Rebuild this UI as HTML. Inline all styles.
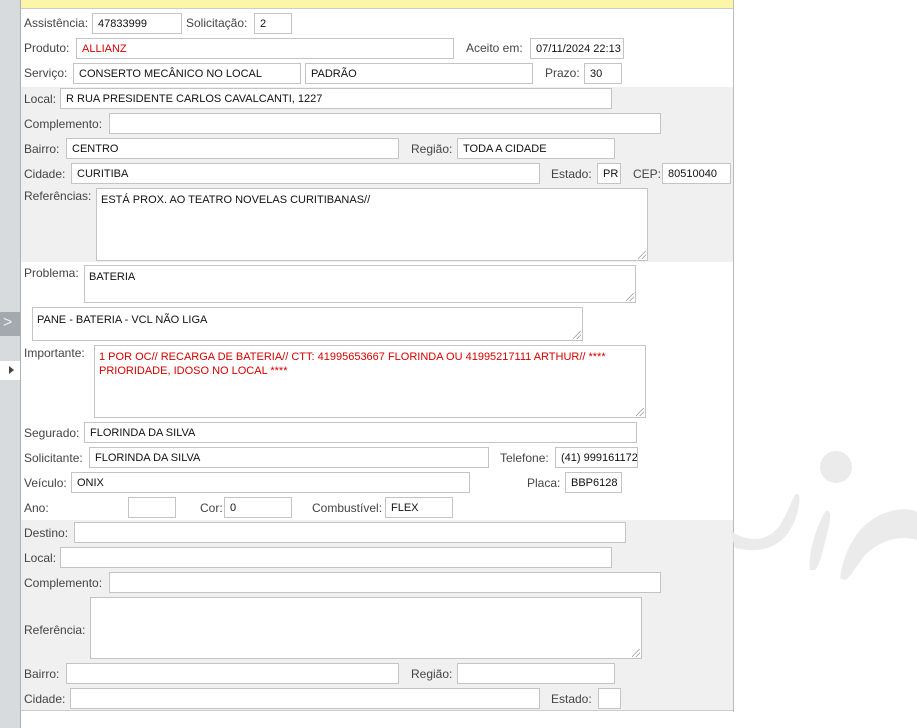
<!DOCTYPE html>
<html><head><meta charset="utf-8"><style>
*{box-sizing:border-box;margin:0;padding:0}
body{width:917px;height:728px;background:#fff;position:relative;overflow:hidden;font-family:"Liberation Sans",Tahoma,sans-serif;font-size:12px;color:#333}
.a{position:absolute}
.l{position:absolute;font-size:12px;color:#444;line-height:14px}
.i{position:absolute;height:21px;background:#fff;border:1px solid #c4c4c4;font-size:11px;color:#111;padding:3px 0 0 5px;white-space:nowrap;overflow:hidden;line-height:14px}
.t{position:absolute;background:#fff;border:1px solid #c4c4c4;font-size:11px;color:#111;padding:4px 0 0 4px;line-height:14px}
.t:after{content:"";position:absolute;right:1px;bottom:1px;width:8px;height:8px;background:linear-gradient(135deg,transparent 45%,#999 45%,#999 52%,transparent 52%,transparent 70%,#999 70%,#999 77%,transparent 77%)}
.r{color:#d40000}
.g{position:absolute;left:21px;width:712px;background:#f0f0f0}
</style></head><body>
<div class="a" style="left:0;top:0;width:20px;height:728px;background:#d8dbde"></div>
<div class="a" style="left:20px;top:0;width:1px;height:728px;background:#aab0b5"></div>
<div class="a" style="left:0;top:312px;width:20px;height:24px;background:#a3a9ae;color:#eee;font-size:16px;line-height:22px;padding-left:3px">&gt;</div>
<div class="a" style="left:0;top:361px;width:20px;height:19px;background:#fff"></div>
<div class="a" style="left:9px;top:366px;width:0;height:0;border-left:5px solid #444;border-top:4px solid transparent;border-bottom:4px solid transparent"></div>
<div class="a" style="left:733px;top:0;width:1px;height:712px;background:#bbb"></div>
<div class="a" style="left:21px;top:0;width:712px;height:9px;background:#fcf7a8;border-bottom:1px solid #ccc"></div>
<div class="g" style="top:87px;height:175px"></div>
<div class="g" style="top:520px;height:191px;border-bottom:1px solid #ccc"></div>
<svg class="a" style="left:730px;top:440px" width="187" height="150">
<circle cx="106" cy="27" r="16" fill="#ebebeb"/>
<path d="M0 90 C20 105 40 100 50 85 C58 72 62 60 65 55 C70 50 72 60 65 80 C55 105 35 115 5 108 Z" fill="#ebebeb"/>
<path d="M80 130 C78 115 85 90 95 72 C100 68 102 74 98 90 C93 110 90 125 85 130 Z" fill="#ebebeb"/>
<path d="M110 138 C115 105 130 85 150 75 C165 68 180 68 187 72 L187 100 C170 95 150 100 135 115 C125 128 120 138 115 140 Z" fill="#ebebeb"/>
</svg>

<span class="l" style="left:24px;top:16px">Assistência:</span><div class="i" style="left:92px;top:13px;width:90px">47833999</div>
<span class="l" style="left:186px;top:16px">Solicitação:</span><div class="i" style="left:254px;top:13px;width:38px">2</div>
<span class="l" style="left:24px;top:41px">Produto:</span><div class="i r" style="left:76px;top:38px;width:378px">ALLIANZ</div>
<span class="l" style="left:466px;top:41px">Aceito em:</span><div class="i" style="left:530px;top:38px;width:94px">07/11/2024 22:13</div>
<span class="l" style="left:24px;top:66px">Serviço:</span><div class="i" style="left:73px;top:63px;width:228px">CONSERTO MECÂNICO NO LOCAL</div>
<div class="i" style="left:305px;top:63px;width:228px">PADRÃO</div>
<span class="l" style="left:545px;top:66px">Prazo:</span><div class="i" style="left:584px;top:63px;width:38px">30</div>

<span class="l" style="left:24px;top:92px">Local:</span><div class="i" style="left:60px;top:88px;width:552px">R RUA PRESIDENTE CARLOS CAVALCANTI, 1227</div>
<span class="l" style="left:24px;top:117px">Complemento:</span><div class="i" style="left:109px;top:113px;width:552px"></div>
<span class="l" style="left:24px;top:142px">Bairro:</span><div class="i" style="left:66px;top:138px;width:333px">CENTRO</div>
<span class="l" style="left:411px;top:142px">Região:</span><div class="i" style="left:457px;top:138px;width:158px">TODA A CIDADE</div>
<span class="l" style="left:24px;top:167px">Cidade:</span><div class="i" style="left:71px;top:163px;width:469px">CURITIBA</div>
<span class="l" style="left:551px;top:167px">Estado:</span><div class="i" style="left:597px;top:163px;width:24px">PR</div>
<span class="l" style="left:633px;top:167px">CEP:</span><div class="i" style="left:662px;top:163px;width:69px">80510040</div>
<span class="l" style="left:24px;top:189px">Referências:</span><div class="t" style="left:96px;top:188px;width:552px;height:73px">ESTÁ PROX. AO TEATRO NOVELAS CURITIBANAS//</div>

<span class="l" style="left:24px;top:266px">Problema:</span><div class="t" style="left:84px;top:265px;width:552px;height:38px">BATERIA</div>
<div class="t" style="left:32px;top:307px;width:551px;height:34px;padding:5px 0 0 4px">PANE - BATERIA - VCL NÃO LIGA</div>
<span class="l" style="left:24px;top:346px">Importante:</span><div class="t r" style="left:94px;top:345px;width:552px;height:73px">1 POR OC// RECARGA DE BATERIA// CTT: 41995653667 FLORINDA OU 41995217111 ARTHUR// ****<br>PRIORIDADE, IDOSO NO LOCAL ****</div>
<span class="l" style="left:24px;top:426px">Segurado:</span><div class="i" style="left:84px;top:422px;width:553px">FLORINDA DA SILVA</div>
<span class="l" style="left:24px;top:451px">Solicitante:</span><div class="i" style="left:89px;top:447px;width:400px">FLORINDA DA SILVA</div>
<span class="l" style="left:500px;top:451px">Telefone:</span><div class="i" style="left:555px;top:447px;width:83px">(41) 999161172</div>
<span class="l" style="left:24px;top:476px">Veículo:</span><div class="i" style="left:71px;top:472px;width:399px">ONIX</div>
<span class="l" style="left:527px;top:476px">Placa:</span><div class="i" style="left:565px;top:472px;width:57px">BBP6128</div>
<span class="l" style="left:24px;top:501px">Ano:</span><div class="i" style="left:128px;top:497px;width:48px"></div>
<span class="l" style="left:200px;top:501px">Cor:</span><div class="i" style="left:224px;top:497px;width:68px">0</div>
<span class="l" style="left:312px;top:501px">Combustível:</span><div class="i" style="left:385px;top:497px;width:68px">FLEX</div>

<span class="l" style="left:24px;top:526px">Destino:</span><div class="i" style="left:74px;top:522px;width:552px"></div>
<span class="l" style="left:24px;top:551px">Local:</span><div class="i" style="left:60px;top:547px;width:552px"></div>
<span class="l" style="left:24px;top:576px">Complemento:</span><div class="i" style="left:109px;top:572px;width:552px"></div>
<span class="l" style="left:24px;top:623px">Referência:</span><div class="t" style="left:90px;top:597px;width:552px;height:62px"></div>
<span class="l" style="left:24px;top:667px">Bairro:</span><div class="i" style="left:66px;top:663px;width:333px"></div>
<span class="l" style="left:411px;top:667px">Região:</span><div class="i" style="left:457px;top:663px;width:158px"></div>
<span class="l" style="left:24px;top:692px">Cidade:</span><div class="i" style="left:70px;top:688px;width:470px"></div>
<span class="l" style="left:551px;top:692px">Estado:</span><div class="i" style="left:598px;top:688px;width:23px"></div>
</body></html>
